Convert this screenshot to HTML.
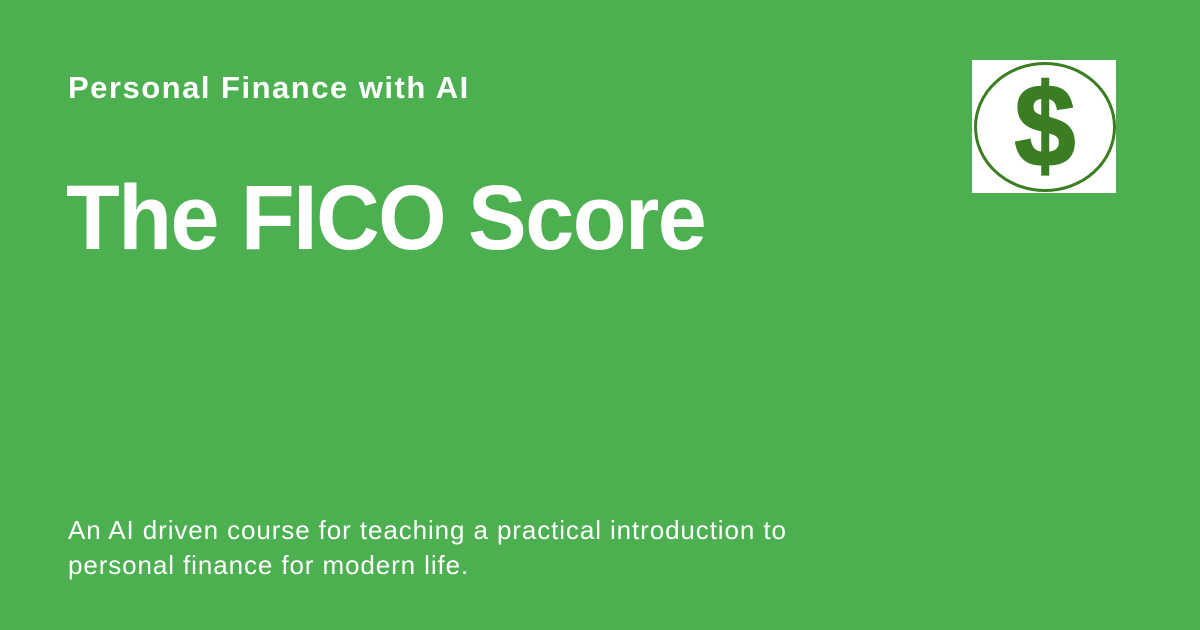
<!DOCTYPE html>
<html><head><style>
html,body{margin:0;padding:0}
body{width:1200px;height:630px;background:#4caf50;position:relative;overflow:hidden;font-family:"Liberation Sans",sans-serif;color:#fff}
.sub{position:absolute;left:68px;top:70px;font-size:31px;font-weight:bold;white-space:nowrap;letter-spacing:1.5px}
.title{position:absolute;left:66px;top:165px;font-size:88px;font-weight:bold;white-space:nowrap;letter-spacing:-1.5px;transform:scaleY(1.04);transform-origin:0 0}
.desc{position:absolute;left:68px;top:513px;font-size:26px;line-height:35px;width:900px;letter-spacing:0.9px}
.logo{position:absolute;left:972px;top:60px;width:144px;height:133px;background:#fff}
</style></head><body>
<div class="sub">Personal Finance with AI</div>
<div class="title">The FICO Score</div>
<div class="desc">An AI driven course for teaching a practical introduction to<br>personal finance for modern life.</div>
<div class="logo"><svg width="144" height="133" viewBox="0 0 144 133">
<ellipse cx="73" cy="67" rx="69.5" ry="63.5" fill="none" stroke="#3a7d22" stroke-width="3"/>
<g transform="translate(73,-13.75) scale(1.07,1.15)">
<text x="0" y="104" text-anchor="middle" font-family="Liberation Sans,sans-serif" font-weight="bold" font-size="102" fill="#3a7d22" stroke="#3a7d22" stroke-width="2">$</text>
</g>
</svg></div>
</body></html>
